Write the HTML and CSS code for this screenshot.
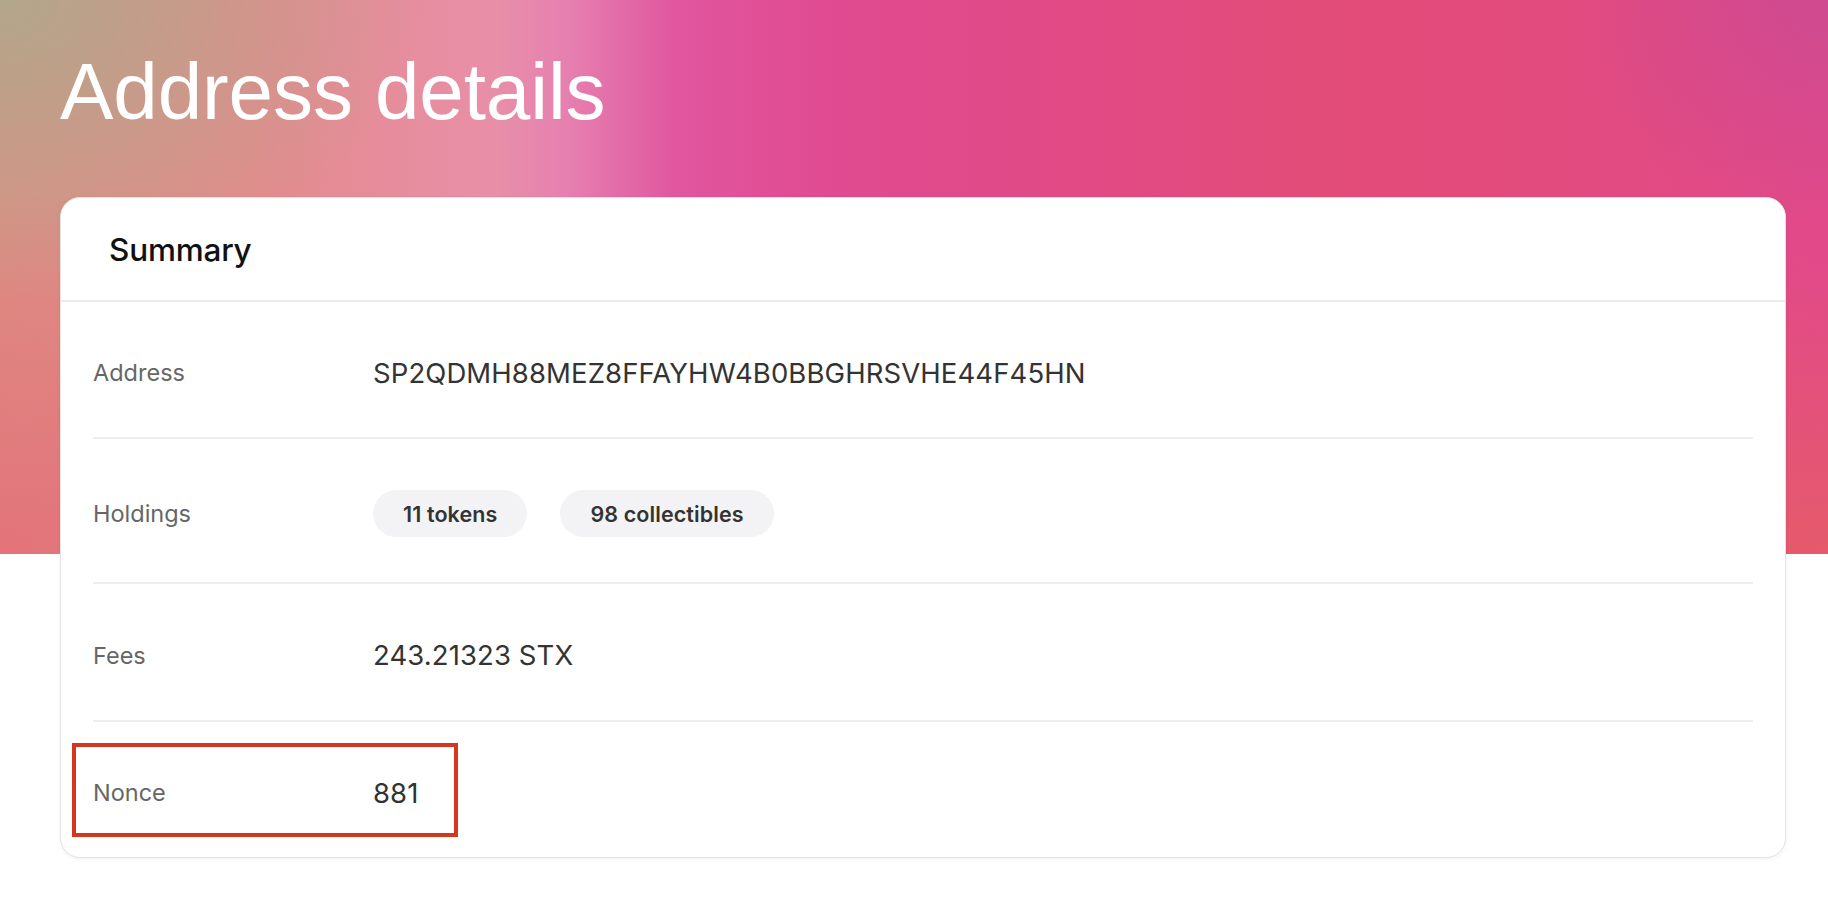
FILE: index.html
```html
<!DOCTYPE html>
<html lang="en">
<head>
<meta charset="utf-8">
<title>Address details</title>
<link rel="stylesheet" href="styles.css">
</head>
<body>
<main class="page">
  <h1 class="page-title">Address details</h1>
  <section class="card">
    <header class="card-header">
      <h2 class="card-title">Summary</h2>
    </header>
    <div class="rows">
      <div class="row row-address">
        <div class="label">Address</div>
        <div class="value">SP2QDMH88MEZ8FFAYHW4B0BBGHRSVHE44F45HN</div>
      </div>
      <div class="row row-holdings">
        <div class="label">Holdings</div>
        <div class="value pills">
          <span class="pill">11 tokens</span>
          <span class="pill">98 collectibles</span>
        </div>
      </div>
      <div class="row row-fees">
        <div class="label">Fees</div>
        <div class="value">243.21323 STX</div>
      </div>
      <div class="row row-nonce">
        <div class="highlight">
          <div class="label">Nonce</div>
          <div class="value">881</div>
        </div>
      </div>
    </div>
  </section>
</main>
</body>
</html>
```
FILE: styles.css
```css
* { box-sizing: border-box; }

html, body {
  margin: 0;
  padding: 0;
}

body {
  background-color: #ffffff;
  background-image:
    radial-gradient(ellipse 420px 300px at 0% 0%, rgba(176, 168, 138, 0.95) 0%, rgba(176, 168, 138, 0) 100%),
    radial-gradient(ellipse 520px 360px at 0% 100%, rgba(228, 112, 120, 0.9) 0%, rgba(228, 112, 120, 0) 100%),
    radial-gradient(ellipse 260px 220px at 100% 0%, rgba(200, 74, 146, 0.75) 0%, rgba(200, 74, 146, 0) 100%),
    radial-gradient(ellipse 600px 300px at 100% 100%, rgba(230, 92, 104, 0.9) 0%, rgba(230, 92, 104, 0) 100%),
    linear-gradient(90deg, #dc8f84 0%, #e48a8c 14%, #e88fa8 27%, #e680b0 31%, #e0569f 37%, #e04a90 46%, #e14a84 60%, #e24c78 72%, #e24b7e 85%, #e1498a 100%);
  background-repeat: no-repeat;
  background-size: 100% 554px;
  font-family: Inter, "Noto Sans", "Liberation Sans", sans-serif;
  color: #333333;
}

.page {
  padding: 46px 42px 40px 60px;
}

.page-title {
  margin: 0;
  font-family: "Liberation Sans", Arial, sans-serif;
  font-weight: 400;
  font-size: 80px;
  line-height: 92px;
  color: #ffffff;
  letter-spacing: -0.1px;
}

.card {
  margin-top: 59px;
  background: #ffffff;
  border: 1px solid #e4e4e4;
  border-radius: 20px;
  box-shadow: 0 1px 4px rgba(0, 0, 0, 0.06);
  overflow: hidden;
}

.card-header {
  height: 104px;
  display: flex;
  align-items: center;
  padding-left: 48px;
  border-bottom: 2px solid #ececec;
}

.card-title {
  margin: 0;
  font-size: 31.5px;
  font-weight: 500;
  color: #111111;
  letter-spacing: -0.2px;
}

.rows {
  padding: 0 32px;
}

.row {
  display: flex;
  align-items: center;
  min-height: 137px;
  border-bottom: 2px solid #eeeeee;
  padding-top: 6px;
}

.row-holdings { min-height: 145px; }
.row-fees { min-height: 138px; }
.row-nonce {
  border-bottom: none;
  min-height: 135px;
  padding-top: 6px;
}

.label {
  width: 280px;
  flex: none;
  font-size: 23.5px;
  color: #666666;
}

.value {
  font-size: 27.5px;
  font-weight: 400;
  color: #333333;
  letter-spacing: 0.1px;
}

.pills {
  display: flex;
  gap: 33px;
}

.pill {
  display: inline-flex;
  align-items: center;
  height: 47px;
  padding: 0 30px;
  border-radius: 24px;
  background: #f3f3f5;
  font-size: 21.5px;
  font-weight: 600;
  color: #333333;
}

.highlight {
  display: flex;
  align-items: center;
  position: relative;
}

.highlight::after {
  content: "";
  position: absolute;
  left: -21px;
  right: -39px;
  top: -33px;
  bottom: -27px;
  border: 4px solid #d4361f;
  pointer-events: none;
}
```
